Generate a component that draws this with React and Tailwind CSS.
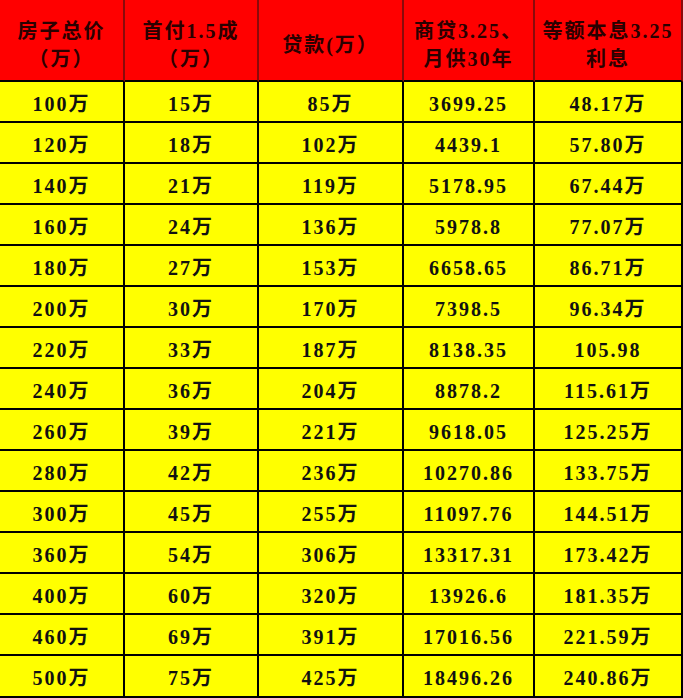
const headers = [
  ["房子总价", "（万）"],
  ["首付1.5成", "（万）"],
  ["贷款(万）"],
  ["商贷3.25、", "月供30年"],
  ["等额本息3.25", "利息"],
];

const rows = [
  ["100万", "15万", "85万", "3699.25", "48.17万"],
  ["120万", "18万", "102万", "4439.1", "57.80万"],
  ["140万", "21万", "119万", "5178.95", "67.44万"],
  ["160万", "24万", "136万", "5978.8", "77.07万"],
  ["180万", "27万", "153万", "6658.65", "86.71万"],
  ["200万", "30万", "170万", "7398.5", "96.34万"],
  ["220万", "33万", "187万", "8138.35", "105.98"],
  ["240万", "36万", "204万", "8878.2", "115.61万"],
  ["260万", "39万", "221万", "9618.05", "125.25万"],
  ["280万", "42万", "236万", "10270.86", "133.75万"],
  ["300万", "45万", "255万", "11097.76", "144.51万"],
  ["360万", "54万", "306万", "13317.31", "173.42万"],
  ["400万", "60万", "320万", "13926.6", "181.35万"],
  ["460万", "69万", "391万", "17016.56", "221.59万"],
  ["500万", "75万", "425万", "18496.26", "240.86万"],
];

export default function App() {
  return (
    <div
      className="w-[683px] h-[698px] overflow-hidden bg-[#ffff00] font-semibold text-[20px] tracking-[2px]"
      style={{ fontFamily: '"Liberation Serif", "Noto Sans CJK SC", serif' }}
    >
      <div className="grid grid-cols-[125px_134px_145px_131px_148px]">
        {/* header */}
        {headers.map((lines, i) => (
          <div
            key={i}
            className="h-[82px] bg-[#ff0000] text-[#2a0000] border-r-2 border-b-2 border-r-[#8a0a0a] border-b-black flex flex-col items-center justify-center pt-[9px] leading-[28px]"
          >
            {lines.map((l, j) => (
              <span key={j}>{l}</span>
            ))}
          </div>
        ))}

        {/* body */}
        {rows.map((r, ri) =>
          r.map((c, ci) => (
            <div
              key={ri + "-" + ci}
              className={`${ri === rows.length - 1 ? "h-[42px]" : "h-[41px]"} border-r-2 border-b-2 border-black flex items-center justify-center text-[#111] pt-[4px]`}
            >
              {c}
            </div>
          ))
        )}
      </div>
    </div>
  );
}
